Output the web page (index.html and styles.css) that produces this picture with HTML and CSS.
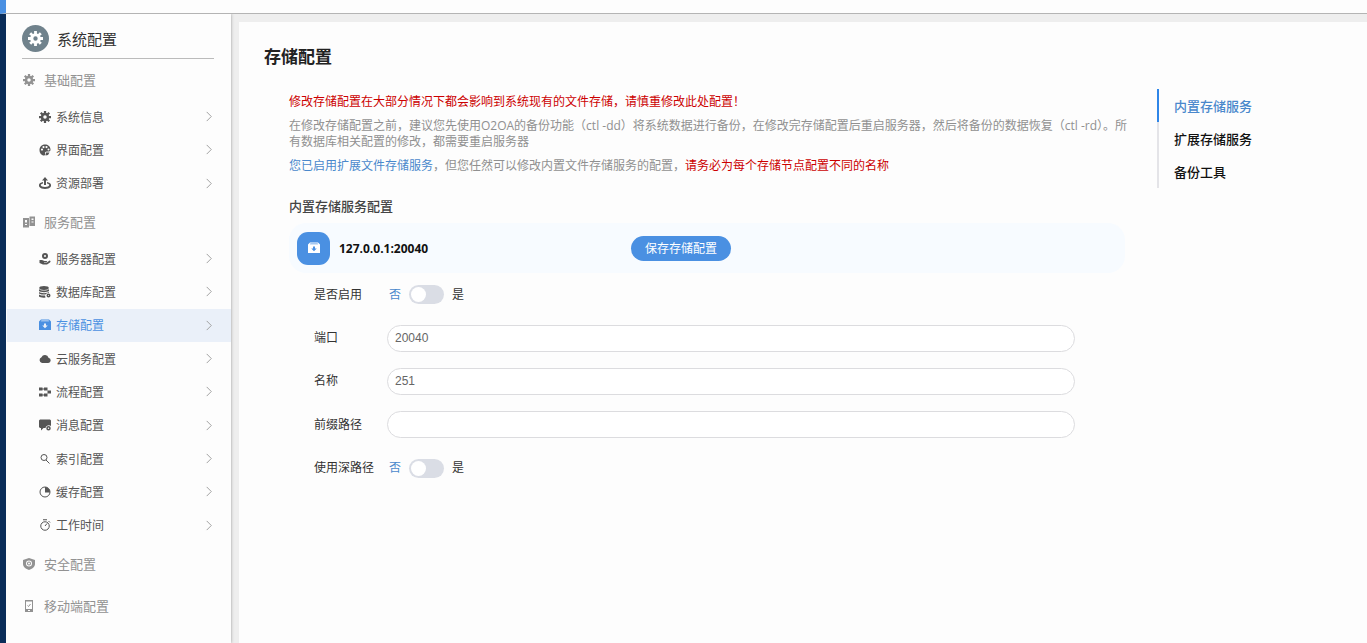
FILE: index.html
```html
<!DOCTYPE html>
<html lang="zh-CN">
<head>
<meta charset="utf-8">
<meta name="viewport" content="width=device-width, initial-scale=1">
<title>系统配置</title>
<link rel="stylesheet" href="styles.css">
</head>
<body>
<div class="topbar"></div>
<div class="app">
  <aside class="sidebar">
    <header class="brand">
      <span class="brand-icon"><svg viewBox="0 0 24 24"><use href="#gear"/></svg></span>
      <span>系统配置</span>
    </header>
    <nav class="nav">
      <section>
        <h2 class="group-title"><svg viewBox="0 0 24 24"><use href="#gear"/></svg>基础配置</h2>
        <ul class="group group-basic">
          <li><a class="item" href="#info"><svg class="icon" viewBox="0 0 24 24"><use href="#gear"/></svg><span>系统信息</span><svg class="arrow" viewBox="0 0 8 12"><path d="M1.500 1l5 5-5 5"/></svg></a></li>
          <li><a class="item" href="#ui"><svg class="icon" viewBox="0 0 24 24"><path fill-rule="evenodd" d="M12 1C5 1 1 6 1 12s4 11 9 11c3 0 3-2 2-4s1-4 4-4h4c2 0 3-2 3-4C23 5 18 1 12 1zM6 9a2.200 2.200 0 1 1 0 4.400A2.200 2.200 0 0 1 6 9zm3-5a2.200 2.200 0 1 1 0 4.400A2.200 2.200 0 0 1 9 4zm6 0a2.200 2.200 0 1 1 0 4.400A2.200 2.200 0 0 1 15 4zm4 5a2 2 0 1 1 0 4 2 2 0 0 1 0-4z"/><path d="M14 17l7 0-3 5-5 1z"/></svg><span>界面配置</span><svg class="arrow" viewBox="0 0 8 12"><path d="M1.500 1l5 5-5 5"/></svg></a></li>
          <li><a class="item" href="#deploy"><svg class="icon" viewBox="0 0 24 24"><path d="M12 0l6 7h-4v9h-4V7H6z"/><path fill-rule="evenodd" d="M8 10v3c-5 1-6 4-2 6 3 1 9 1 12 0 4-2 3-5-2-6v-3c7 1 10 6 7 10-3 5-19 5-22 0-3-4 0-9 7-10z"/></svg><span>资源部署</span><svg class="arrow" viewBox="0 0 8 12"><path d="M1.500 1l5 5-5 5"/></svg></a></li>
        </ul>
      </section>
      <section>
        <h2 class="group-title"><svg viewBox="0 0 24 24"><path fill-rule="evenodd" d="M0 4h12v19H0zM4 8v5h4V8zm0 8v2h4v-2zM13 1h11v19H13zm4 4v3h4V5zm0 6v2h4v-2z"/></svg>服务配置</h2>
        <ul class="group group-service">
          <li><a class="item" href="#server"><svg class="icon" viewBox="0 0 24 24"><path fill-rule="evenodd" d="M12 0a6 6 0 1 1 0 12 6 6 0 0 1 0-12zm0 4a2 2 0 1 0 0 4 2 2 0 0 0 0-4z"/><path d="M1 14h5l5 2h4c2 0 2 2 0 2h-5v1h6l5-4c2 0 3 2 1 4l-6 4H8l-7-3z"/></svg><span>服务器配置</span><svg class="arrow" viewBox="0 0 8 12"><path d="M1.500 1l5 5-5 5"/></svg></a></li>
          <li><a class="item" href="#database"><svg class="icon" viewBox="0 0 24 24"><ellipse cx="10" cy="4" rx="9.500" ry="3.800"/><path d="M0 6c3 4 17 4 20 0v4c-3 3-17 3-20 0zM0 12c3 3 17 3 20 0v2c-3 0-6 1-7 3-5 0-11 0-13-2zM0 17c2 2 7 2 12 2l1 4C8 24 2 23 0 21z"/><path fill-rule="evenodd" d="M19 15a4 4 0 1 1 0 8 4 4 0 0 1 0-8zm0 3a1 1 0 1 0 0 2 1 1 0 0 0 0-2z"/></svg><span>数据库配置</span><svg class="arrow" viewBox="0 0 8 12"><path d="M1.500 1l5 5-5 5"/></svg></a></li>
          <li><a class="item current" href="#storage" aria-current="page"><svg class="icon" viewBox="0 0 24 24"><use href="#store"/></svg><span>存储配置</span><svg class="arrow" viewBox="0 0 8 12"><path d="M1.500 1l5 5-5 5"/></svg></a></li>
          <li><a class="item" href="#cloud"><svg class="icon" viewBox="0 0 24 24"><path d="M6 20a6 6 0 0 1-1-11.500A7.500 7.500 0 0 1 19 9.500 5.300 5.300 0 0 1 18.500 20z"/></svg><span>云服务配置</span><svg class="arrow" viewBox="0 0 8 12"><path d="M1.500 1l5 5-5 5"/></svg></a></li>
          <li><a class="item" href="#process"><svg class="icon" viewBox="0 0 24 24"><path d="M0 3h7v6H0zM10 3h7v6h-7zM17 9h7v6h-7zM0 15h7v6H0zM10 15h7v6h-7zM7 5h3v2H7zM7 17h3v2H7z"/></svg><span>流程配置</span><svg class="arrow" viewBox="0 0 8 12"><path d="M1.500 1l5 5-5 5"/></svg></a></li>
          <li><a class="item" href="#message"><svg class="icon" viewBox="0 0 24 24"><path d="M2 1h20l2 2v11c-4-3-10-1-11 4H9l-5 5v-5H2l-2-2V3z"/><path fill-rule="evenodd" d="M19 14a4.500 4.500 0 1 1 0 9 4.500 4.500 0 0 1 0-9zm0 3a1.500 1.500 0 1 0 0 3 1.500 1.500 0 0 0 0-3z"/></svg><span>消息配置</span><svg class="arrow" viewBox="0 0 8 12"><path d="M1.500 1l5 5-5 5"/></svg></a></li>
          <li><a class="item" href="#index"><svg class="icon" viewBox="0 0 24 24"><path class="line" d="M10 3a6 6 0 1 1 0 12 6 6 0 0 1 0-12zM14 14l7 7"/></svg><span>索引配置</span><svg class="arrow" viewBox="0 0 8 12"><path d="M1.500 1l5 5-5 5"/></svg></a></li>
          <li><a class="item" href="#cache"><svg class="icon" viewBox="0 0 24 24"><circle class="line" cx="12" cy="12" r="10"/><path d="M12 2a10 10 0 0 1 10 11H12z"/></svg><span>缓存配置</span><svg class="arrow" viewBox="0 0 8 12"><path d="M1.500 1l5 5-5 5"/></svg></a></li>
          <li><a class="item" href="#worktime"><svg class="icon" viewBox="0 0 24 24"><circle class="line" cx="12" cy="14" r="8.500"/><path class="line" d="M8 1.500h8M12 14l4-5M19 4l3 3"/></svg><span>工作时间</span><svg class="arrow" viewBox="0 0 8 12"><path d="M1.500 1l5 5-5 5"/></svg></a></li>
        </ul>
      </section>
      <section>
        <h2 class="group-title"><svg viewBox="0 0 24 24"><path fill-rule="evenodd" d="M12 0l12 4v8c0 6-6 10-12 12C6 22 0 18 0 12V4zm0 5a6 6 0 1 0 0 12 6 6 0 0 0 0-12z"/><path fill-rule="evenodd" d="M12 7a4 4 0 1 1 0 8 4 4 0 0 1 0-8zm0 2a2 2 0 1 0 0 4 2 2 0 0 0 0-4z"/></svg>安全配置</h2>
      </section>
      <section>
        <h2 class="group-title"><svg viewBox="0 0 24 24"><path fill-rule="evenodd" d="M4 0h16v24H4zM6 3v15h12V3zm4 17v2h4v-2z"/><path class="line" d="M9 11l2 2 4-5"/></svg>移动端配置</h2>
      </section>
    </nav>
  </aside>

  <main class="panel">
    <h1 class="title">存储配置</h1>
    <div class="columns">
      <div class="content">
        <div class="notes">
          <p class="danger">修改存储配置在大部分情况下都会影响到系统现有的文件存储，请慎重修改此处配置！</p>
          <p>在修改存储配置之前，建议您先使用O2OA的备份功能（ctl -dd）将系统数据进行备份，在修改完存储配置后重启服务器，然后将备份的数据恢复（ctl -rd）。所有数据库相关配置的修改，都需要重启服务器</p>
          <p><span class="accent">您已启用扩展文件存储服务</span>，但您任然可以修改内置文件存储服务的配置，<span class="danger">请务必为每个存储节点配置不同的名称</span></p>
        </div>
        <h2 class="subtitle">内置存储服务配置</h2>
        <div class="node">
          <div class="node-name">
            <span class="node-icon"><svg viewBox="0 0 24 24"><use href="#store"/></svg></span>
            <strong>127.0.0.1:20040</strong>
          </div>
          <button class="save" type="button">保存存储配置</button>
        </div>
        <form class="form">
          <div class="row">
            <label for="enable">是否启用</label>
            <div class="switch"><span class="accent">否</span><input id="enable" type="checkbox" role="switch"><span>是</span></div>
          </div>
          <div class="row">
            <label for="port">端口</label>
            <input class="field" id="port" type="text" value="20040">
          </div>
          <div class="row">
            <label for="name">名称</label>
            <input class="field" id="name" type="text" value="251">
          </div>
          <div class="row">
            <label for="prefix">前缀路径</label>
            <input class="field" id="prefix" type="text">
          </div>
          <div class="row">
            <label for="deep">使用深路径</label>
            <div class="switch"><span class="accent">否</span><input id="deep" type="checkbox" role="switch"><span>是</span></div>
          </div>
        </form>
      </div>
      <nav class="anchors">
        <a class="active" href="#builtin">内置存储服务</a>
        <a href="#extended">扩展存储服务</a>
        <a href="#backup">备份工具</a>
      </nav>
    </div>
  </main>
</div>
<svg class="defs" aria-hidden="true">
  <symbol id="gear" viewBox="0 0 24 24"><g fill="none" stroke="currentColor"><circle cx="12" cy="12" r="6" stroke-width="5"/><path stroke-width="4.500" d="M12 0v5M12 19v5M0 12h5M19 12h5M3.500 3.500L7 7M17 17l3.500 3.500M3.500 20.500L7 17M17 7l3.500-3.500"/></g></symbol>
  <symbol id="store" viewBox="0 0 24 24"><path fill-rule="evenodd" d="M4 1h16l4 4v17H0V5zM3.500 4.500h17L19 3H5zM10 9v4H6.500l5.500 5.500 5.500-5.500H14V9z"/></symbol>
</svg>
</body>
</html>
```
FILE: styles.css
```css
* {
  box-sizing: border-box;
}

body {
  margin: 0;
  min-height: 100vh;
  display: flex;
  flex-direction: column;
  font: 12px/16px "Open Sans", "Noto Sans CJK SC", sans-serif;
  color: #333;
  background: #0a2d59;
}

h1, h2, p, ul {
  margin: 0;
  padding: 0;
}

ul {
  list-style: none;
}

a {
  color: inherit;
  text-decoration: none;
}

svg {
  display: block;
  flex: none;
  fill: currentColor;
}

.defs {
  display: none;
}

.line {
  fill: none;
  stroke: currentColor;
  stroke-width: 2;
}

.topbar {
  height: 14px;
  border-left: 6px solid #4a90e2;
  border-bottom: 1px solid #b4b4b4;
  background: #fdfdfd;
}

.app {
  flex: 1;
  display: flex;
  margin-left: 6px;
  background: #eee;
}

.sidebar {
  flex: none;
  width: 225px;
  background: #fdfdfd;
  box-shadow: 0 0 3px #999;
  clip-path: inset(0 -5px 0 0);
}

.brand {
  display: flex;
  align-items: center;
  gap: 8px;
  height: 45px;
  margin: 0 17px 0 16px;
  padding-top: 5px;
  border-bottom: 1px solid #bbb;
  font-size: 15px;
}

.brand-icon {
  display: grid;
  place-items: center;
  width: 27px;
  height: 27px;
  border-radius: 50%;
  color: #fff;
  background: #70828c;
}

.brand-icon svg {
  width: 15px;
  height: 15px;
}

.nav {
  display: grid;
  gap: 1px;
}

.group-title {
  display: flex;
  align-items: center;
  gap: 9px;
  height: 41px;
  padding-left: 17px;
  font-size: 13px;
  font-weight: 400;
  color: #929292;
}

.group-title svg {
  width: 12px;
  height: 12px;
}

.group {
  display: grid;
  grid-auto-rows: 1fr;
}

.group-basic {
  min-height: 100px;
}

.group-service {
  min-height: 300px;
}

.item {
  display: flex;
  align-items: center;
  gap: 5px;
  height: 100%;
  margin-left: 1px;
  padding: 0 18px 0 32px;
  color: #555;
}

.item span {
  padding-top: 2px;
}

.item.current {
  color: #4a90e2;
  background: #eaf0f9;
}

.icon {
  width: 12px;
  height: 12px;
}

.arrow {
  width: 8px;
  height: 11px;
  margin-left: auto;
  fill: none;
  stroke: #999;
}

.panel {
  flex: 1;
  min-width: 0;
  margin: 8px 0 0 8px;
  padding: 23px 0 24px 25px;
  background: #fdfdfd;
}

.title {
  font-size: 17px;
  line-height: 24px;
  color: #222;
}

.columns {
  display: flex;
  align-items: flex-start;
  gap: 8px;
  padding: 20px 0 0 25px;
}

.content {
  flex: 1;
  min-width: 0;
}

.notes {
  display: grid;
  gap: 8px;
  padding: 5px 13px 0 0;
  color: #909090;
}

.danger {
  color: #c00;
}

.accent {
  color: #4a88cc;
}

.subtitle {
  margin-top: 22px;
  font-size: 13px;
  font-weight: 500;
  line-height: 20px;
  color: #444;
}

.node {
  display: grid;
  grid-template-columns: 2fr 3fr;
  align-items: center;
  justify-items: start;
  height: 50px;
  margin: 7px 24px 0 0;
  padding: 0 8px;
  border-radius: 17px;
  background: #f7fbff;
}

.node-name {
  display: flex;
  align-items: center;
  gap: 9px;
  color: #111;
}

.node-icon {
  display: grid;
  place-items: center;
  width: 33px;
  height: 33px;
  border-radius: 11px;
  color: #fff;
  background: #4a90e2;
}

.node-icon svg {
  width: 12px;
  height: 12px;
}

.node strong {
  padding-top: 1px;
}

.save {
  width: 100px;
  height: 25px;
  margin-left: 6px;
  padding: 1px 0 0;
  border: 0;
  border-radius: 13px;
  font: inherit;
  color: #fff;
  background: #4a90e2;
}

.form {
  display: grid;
  grid-auto-rows: 1fr;
  min-height: 217px;
  padding: 0 74px 0 25px;
}

.row {
  display: grid;
  grid-template-columns: 73px 1fr;
  align-items: center;
}

.field {
  width: 100%;
  height: 27px;
  padding: 0 7px;
  border: 1px solid #dcdcdf;
  border-radius: 14px;
  font: 12px "Liberation Sans", "Noto Sans CJK SC", sans-serif;
  color: #666;
  background: #fff;
}

.switch {
  display: flex;
  align-items: center;
  gap: 8px;
  padding-left: 2px;
}

.switch input {
  appearance: none;
  display: flex;
  width: 35px;
  height: 19px;
  margin: 0;
  padding: 2px;
  border-radius: 10px;
  background: #dadde5;
}

.switch input::before {
  content: "";
  width: 15px;
  height: 15px;
  border-radius: 50%;
  background: #fff;
}

.switch input:checked {
  justify-content: flex-end;
  background: #4a90e2;
}

.anchors {
  flex: none;
  width: 210px;
  font-size: 13px;
  font-weight: 500;
  color: #111;
}

.anchors a {
  display: flex;
  align-items: center;
  height: 33px;
  padding-left: 15px;
  border-left: 2px solid #e4e4e8;
}

.anchors .active {
  color: #4a88cc;
  border-color: #2f86e8;
}
```
